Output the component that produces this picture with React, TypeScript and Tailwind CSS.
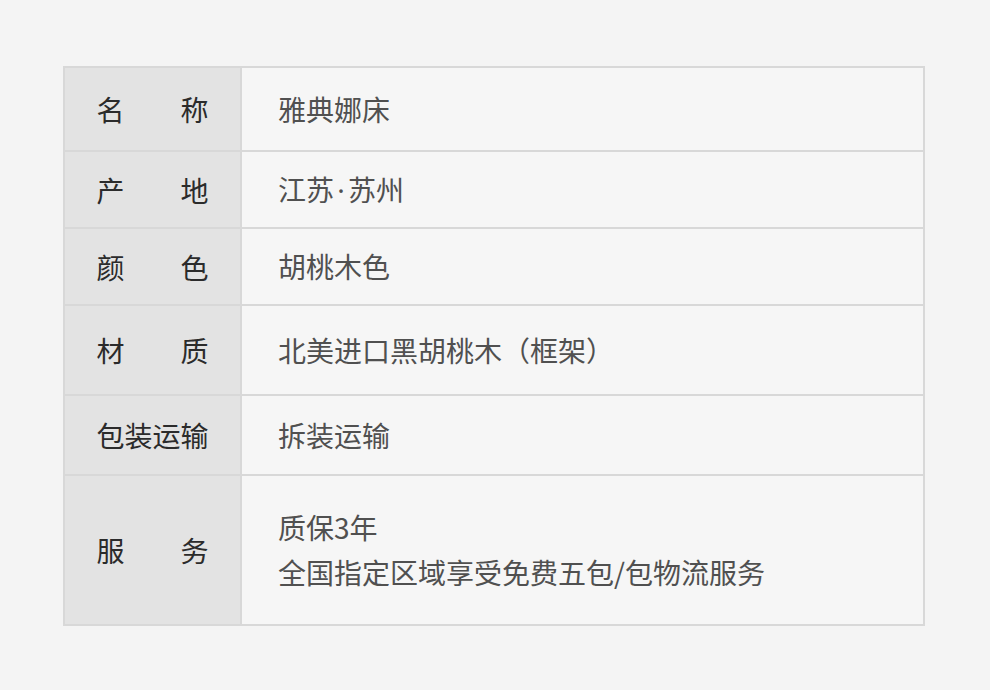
import React from 'react';

type Row = { label: string[]; value: React.ReactNode[]; h: string };

const Dot = () => <span className="inline-block w-[14px] text-center font-['Noto_Sans',sans-serif]">·</span>;

const rows: Row[] = [
    { label: ['名', '称'], value: ['雅典娜床'], h: 'h-[82px]' },
    { label: ['产', '地'], value: [<>江苏<Dot />苏州</>], h: 'h-[77px]' },
    { label: ['颜', '色'], value: ['胡桃木色'], h: 'h-[77px]' },
    { label: ['材', '质'], value: ['北美进口黑胡桃木（框架）'], h: 'h-[90px]' },
    { label: ['包装运输'], value: ['拆装运输'], h: 'h-[80px]' },
    { label: ['服', '务'], value: ['质保3年', '全国指定区域享受免费五包/包物流服务'], h: 'h-[150px]' },
];

const App: React.FC = () => (
    <div className="min-h-[690px] w-full bg-[#f4f4f4] pt-[66px] pl-[63px] font-['Noto_Sans_CJK_SC','Noto_Sans',sans-serif]">
        <div className="w-[862px] border-2 border-[#d8d8d8] bg-[#f6f6f6]">
            {rows.map((row, i) => (
                <div key={i} className={`flex ${row.h} ${i > 0 ? 'border-t-2 border-[#d8d8d8]' : ''}`}>
                    <div className="flex w-[177px] shrink-0 items-center justify-center border-r-2 border-[#d8d8d8] bg-[#e3e3e3]">
                        <div className="flex w-[112px] justify-between text-[28px] leading-none text-[#2b2b2b]">
                            {row.label.map((t) => (
                                <span key={t}>{t}</span>
                            ))}
                        </div>
                    </div>
                    <div className="flex flex-col justify-center pl-[36px] text-[28px] leading-[45px] text-[#505050]">
                        {row.value.map((t, j) => (
                            <div key={j}>{t}</div>
                        ))}
                    </div>
                </div>
            ))}
        </div>
    </div>
);

export default App;
